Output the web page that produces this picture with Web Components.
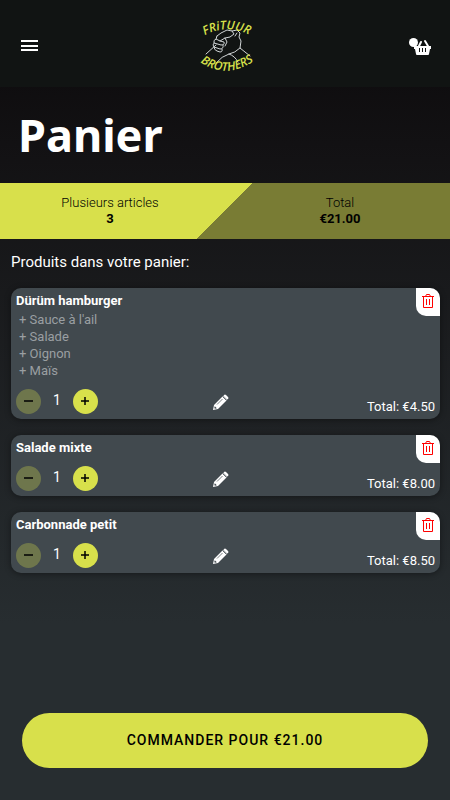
<!DOCTYPE html>
<html lang="fr">
<head>
<meta charset="utf-8">
<meta name="viewport" content="width=device-width, initial-scale=1">
<title>Panier</title>
<style>
    html {
        height: 100%;
    }
    body {
        --accent: #d8e04b;
        --header: #111413;
        --card: #41494e;
        margin: 0;
        min-height: 100%;
        display: flex;
        flex-direction: column;
        background: linear-gradient(#0f0d0f 10%, #161618 28%, #272d30 78%);
        color: #fff;
        font-family: Roboto, "Liberation Sans", sans-serif;
        font-size: 13px;
    }
</style>
</head>
<body>
<site-header></site-header>
<page-title>Panier</page-title>
<cart-summary></cart-summary>
<cart-list>Produits dans votre panier:</cart-list>
<order-bar>Commander pour €21.00</order-bar>

<script>
class SiteHeader extends HTMLElement {

    constructor() {
        super();
        this.shadowDOM = this.attachShadow({mode: "open"});
    }

    connectedCallback() {
        this.shadowDOM.innerHTML = `
        <style>
        :host {
            display: block;
            background: var(--header);
        }
        header {
            display: flex;
            align-items: center;
            justify-content: space-between;
            padding: 14px 18px 9px;
        }
        button {
            display: flex;
            border: 0;
            padding: 0;
            background: none;
            color: inherit;
            cursor: pointer;
        }
        svg {
            display: block;
        }
        text {
            font-family: "Open Sans", "Noto Sans", sans-serif;
            font-style: italic;
            font-weight: 600;
            font-size: 12px;
            fill: var(--accent);
        }
        </style>
        <header>
            <button aria-label="Menu">
                <svg width="24" height="24" viewBox="0 0 24 24" fill="currentColor">
                    <path d="M3 6h17v2H3zM3 11h17v2H3zM3 15h17v2H3z"/>
                </svg>
            </button>
            <svg width="64" height="64" viewBox="-4 -4 64 64" role="img" aria-label="Frituur Brothers">
                <path id="top" d="M2 21Q29 2 58 20" fill="none"/>
                <path id="bottom" d="M-1 41Q29 65 61 40" fill="none"/>
                <g fill="none" stroke="#d0d4d6" stroke-width="1" stroke-linecap="round" stroke-linejoin="round">
                    <path d="M9 36L19 27M20 18L24 15L30 12L35 13L40 12L43 15L42 19L44 23L43 30L53 38"/>
                    <path d="M20 18L19 21L23 23L28 20L33 19L37 16L35 13M28 20L30 24L28 28"/>
                    <path d="M19 21Q16 22 17 25L24 27Q28 27 27 24L23 23M17 25Q15 27 17 29L23 31Q27 31 26 27M17 29Q17 32 20 33L23 34Q26 34 25 31"/>
                    <path d="M40 15L38 18M43 30Q38 35 32 36Q25 38 19 45M32 36Q38 38 41 44"/>
                </g>
                <text><textPath href="#top" startOffset="50%" text-anchor="middle">FRiTUUR</textPath></text>
                <text><textPath href="#bottom" startOffset="50%" text-anchor="middle">BROTHERS</textPath></text>
            </svg>
            <button aria-label="Panier">
                <svg width="24" height="24" viewBox="0 0 24 24">
                    <path d="M6 12h17v3h-1l-1 5q0 1-1 1H9q-1 0-1-1l-1-5H6z" fill="#fff"/>
                    <path d="M11 12l2-4M20 12l-3-5" stroke="#fff" stroke-width="2" stroke-linecap="round"/>
                    <path d="M11.500 14v4M14.500 14v4M17.500 14v4" stroke="#111413" stroke-width="1"/>
                    <circle cx="5.500" cy="8.500" r="4.500" fill="#fff"/>
                </svg>
            </button>
        </header>
        `;
    }
}

customElements.define("site-header", SiteHeader);

class PageTitle extends HTMLElement {

    constructor() {
        super();
        this.shadowDOM = this.attachShadow({mode: "open"});
    }

    connectedCallback() {
        this.shadowDOM.innerHTML = `
        <style>
        :host {
            display: block;
            padding: 16px 18px;
        }
        h1 {
            margin: 0;
            font: bold 45px/64px "Noto Sans", "Open Sans", sans-serif;
        }
        </style>
        <h1><slot></slot></h1>
        `;
    }
}

customElements.define("page-title", PageTitle);

class CartSummary extends HTMLElement {

    constructor() {
        super();
        this.shadowDOM = this.attachShadow({mode: "open"});
    }

    connectedCallback() {
        this.shadowDOM.innerHTML = `
        <style>
        :host {
            display: block;
            background: linear-gradient(135deg, var(--accent) 50%, #797c34 50%);
            color: #000;
            text-align: center;
        }
        dl {
            display: grid;
            grid-template-columns: 1fr 1fr;
            gap: 10px;
            margin: 0;
            padding: 12px 0;
            line-height: 16px;
        }
        dt {
            font-weight: 300;
        }
        dd {
            margin: 0;
            font-weight: bold;
        }
        </style>
        <dl>
            <div><dt>Plusieurs articles</dt><dd>3</dd></div>
            <div><dt>Total</dt><dd>€21.00</dd></div>
        </dl>
        `;
    }
}

customElements.define("cart-summary", CartSummary);

class CartItem extends HTMLElement {

    constructor() {
        super();
        this.shadowDOM = this.attachShadow({mode: "open"});
    }

    set product(product) {
        this._product = product;
        this.render();
    }

    render() {
        const extras = this._product.extras.map(extra => `<li>+ ${extra}</li>`).join("");
        this.shadowDOM.innerHTML = `
        <style>
        :host {
            display: block;
            position: relative;
            padding: 4px 5px 5px;
            border-radius: 10px;
            background: var(--card);
            box-shadow: 0 1px 6px rgba(0, 0, 0, 0.4);
        }
        h3 {
            margin: 0;
            font-size: 13px;
            line-height: 18px;
        }
        ul {
            list-style: none;
            margin: 0;
            padding: 1px 3px;
            color: #9a9fa2;
            line-height: 17px;
        }
        button {
            display: flex;
            align-items: center;
            justify-content: center;
            border: 0;
            padding: 0;
            background: none;
            color: #fff;
            cursor: pointer;
        }
        .controls {
            display: grid;
            grid-template-columns: 47% auto 1fr;
            align-items: center;
            margin-top: 9px;
        }
        .stepper {
            display: flex;
        }
        .stepper button {
            width: 25px;
            height: 25px;
            border-radius: 50%;
            background: var(--accent);
            color: #000;
        }
        .stepper .minus {
            background: #6e764c;
        }
        output {
            width: 32px;
            font-size: 14px;
            line-height: 23px;
            text-align: center;
        }
        .total {
            align-self: end;
            line-height: 15px;
            text-align: right;
        }
        .delete {
            position: absolute;
            top: 0;
            right: 0;
            width: 24px;
            height: 28px;
            border-radius: 0 10px;
            background: #fff;
        }
        </style>
        <h3>${this._product.name}</h3>
        ${extras ? `<ul>${extras}</ul>` : ""}
        <button class="delete" aria-label="Supprimer">
            <svg width="12" height="16" viewBox="0 0 12 16" fill="none" stroke="#f00" stroke-width="1">
                <path d="M0 2.500h12M1.500 2.500v11h9v-11M3.500 2.500l1-2h3l1 2M4.500 5v6M7.500 5v6"/>
            </svg>
        </button>
        <div class="controls">
            <div class="stepper">
                <button class="minus" aria-label="Moins">
                    <svg width="11" height="11" viewBox="0 0 11 11"><path d="M1 5h9" stroke="#000" stroke-width="1.500"/></svg>
                </button>
                <output>${this._product.amount}</output>
                <button aria-label="Plus">
                    <svg width="11" height="11" viewBox="0 0 11 11"><path d="M1 5h8M5 1v8" stroke="#000" stroke-width="1.500"/></svg>
                </button>
            </div>
            <button aria-label="Modifier">
                <svg width="16" height="16" viewBox="0 0 16 16">
                    <path d="M0 16l1-5L10 2l4 4-9 9z" fill="#fff"/>
                    <path d="M11 1q1-1 2 0l2 2q1 1 0 2l-1 .500L10.500 2z" fill="#fff"/>
                    <path d="M9.500 2.500l4 4" stroke="#41494e" stroke-width=".8"/>
                    <path d="M4 10.500l5.500-5.500" stroke="#41494e" stroke-width=".7"/>
                    <path d="M1.800 12.200l2 2-1.800.5-.7-.7z" fill="#41494e"/>
                </svg>
            </button>
            <span class="total">Total: €${this._product.total}</span>
        </div>
        `;
    }
}

customElements.define("cart-item", CartItem);

class CartList extends HTMLElement {

    constructor() {
        super();
        this.shadowDOM = this.attachShadow({mode: "open"});
    }

    set products(products) {
        this._products = products;
        this.render();
    }

    render() {
        this.shadowDOM.innerHTML = `
        <style>
        :host {
            display: flex;
            flex-direction: column;
            gap: 16px;
            flex: 1;
            padding: 13px 10px 16px 11px;
        }
        h2 {
            margin: 0;
            font-size: 15px;
            font-weight: normal;
            line-height: 20px;
        }
        </style>
        <h2><slot></slot></h2>
        `;
        this._products.forEach(product => {
            const cartItemElement = document.createElement("cart-item");
            cartItemElement.product = product;
            this.shadowDOM.appendChild(cartItemElement);
        });
    }
}

customElements.define("cart-list", CartList);

class OrderBar extends HTMLElement {

    constructor() {
        super();
        this.shadowDOM = this.attachShadow({mode: "open"});
    }

    connectedCallback() {
        this.shadowDOM.innerHTML = `
        <style>
        :host {
            display: block;
            padding: 0 22px 32px;
        }
        button {
            width: 100%;
            padding: 17px;
            border: 0;
            border-radius: 28px;
            background: var(--accent);
            color: #000;
            font: 500 14px/21px Roboto, "Liberation Sans", sans-serif;
            letter-spacing: 1px;
            text-transform: uppercase;
            cursor: pointer;
        }
        </style>
        <button><slot></slot></button>
        `;
    }
}

customElements.define("order-bar", OrderBar);

document.querySelector("cart-list").products = [
    {name: "Dürüm hamburger", extras: ["Sauce à l'ail", "Salade", "Oignon", "Maïs"], amount: 1, total: "4.50"},
    {name: "Salade mixte", extras: [], amount: 1, total: "8.00"},
    {name: "Carbonnade petit", extras: [], amount: 1, total: "8.50"}
];
</script>
</body>
</html>
